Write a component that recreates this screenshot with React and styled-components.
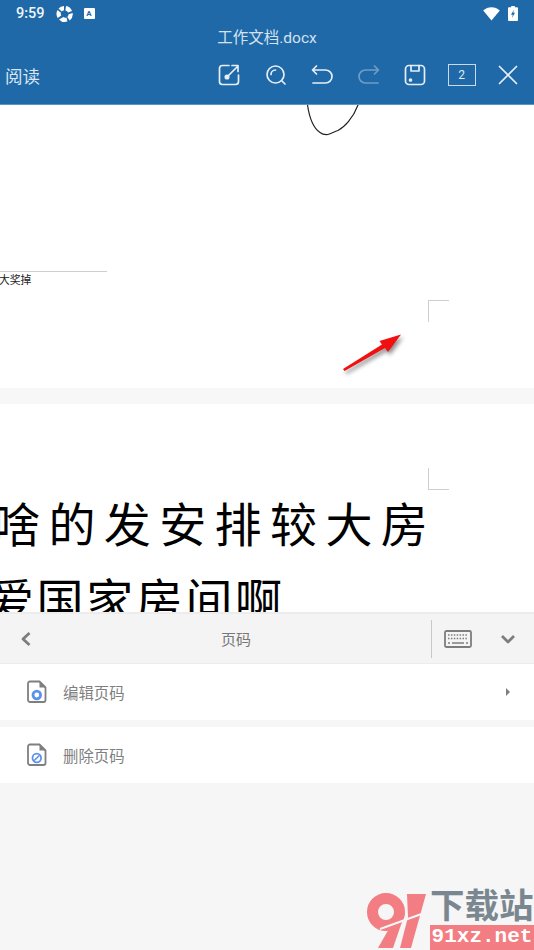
import styled, { createGlobalStyle } from 'styled-components';

const cjk = `Roboto, "Noto Sans CJK SC", sans-serif`;

const GlobalStyle = createGlobalStyle`
    html, body {
        margin: 0;
        padding: 0;
        background: #f6f6f6;
    }
    * {
        box-sizing: border-box;
    }
`

function ToolIcon({ children, dim }){
    return (
        <IconSlot dim={dim}>
            <svg width="26" height="26" viewBox="0 0 26 26" fill="none" stroke="currentColor" strokeWidth="1.700" strokeLinecap="round" strokeLinejoin="round">
                {children}
            </svg>
        </IconSlot>
    );
}

function PageIcon({ children }){
    return (
        <svg width="22" height="24" viewBox="0 0 22 24" fill="none">
            <path d="M4 1.5h9.5l6 6V20a2 2 0 0 1-2 2H4a2 2 0 0 1-2-2V3.500a2 2 0 0 1 2-2z" stroke="#7f7f7f" strokeWidth="1.800" strokeLinejoin="round" />
            <path d="M13.500 1.500v6h6z" fill="#7f7f7f" />
            {children}
        </svg>
    );
}

export default function App(){
    return (
        <Screen>
            <GlobalStyle />
            <Header>
                <StatusBar>
                    <Time>9:59</Time>
                    <svg width="18" height="18" viewBox="0 0 18 18" fill="#fff">
                        <path d="M8 1a8 8 0 0 0-5.500 2.600l3.300 2.900A4 4 0 0 1 8 5.200zM10 1.100l-.6 4.300a4 4 0 0 1 2.700 2.100l3.900-1.600A8 8 0 0 0 10 1.100zM16.700 8l-4.100 1.200a4 4 0 0 1-1.300 2.700l2.400 3.500A8 8 0 0 0 16.700 8zM1.500 5a8 8 0 0 0 .2 8l3.600-2.500a4 4 0 0 1-.4-2.700zM3 14.400a8 8 0 0 0 8.400 2.200l-.9-4.100a4 4 0 0 1-3.200-.4z" />
                    </svg>
                    <StatusBadge>A</StatusBadge>
                    <StatusRight>
                        <svg width="17" height="14" viewBox="0 0 17 14" fill="#fff">
                            <path d="M.2 3.600C2.400 1.400 5.300.2 8.500.2s6.100 1.200 8.300 3.400L8.500 13.600z" />
                        </svg>
                        <svg width="10" height="15" viewBox="0 0 10 15">
                            <path d="M3.200 0h3.600v1.200H9a1 1 0 0 1 1 1V14a1 1 0 0 1-1 1H1a1 1 0 0 1-1-1V2.200a1 1 0 0 1 1-1h2.200z" fill="#fff" />
                            <path d="M6 3.500L3 8.700h1.800L4 12l3-5.200H5.200z" fill="#1f69a9" />
                        </svg>
                    </StatusRight>
                </StatusBar>
                <Title>工作文档.docx</Title>
                <Toolbar>
                    <ReadLabel>阅读</ReadLabel>
                    <ToolIcons>
                        <ToolIcon>
                            <path d="M13 3.500H6.500a3 3 0 0 0-3 3v13a3 3 0 0 0 3 3h13a3 3 0 0 0 3-3V13" />
                            <path d="M12 14l9.500-9.500M16 3.500h6v6" />
                            <circle cx="11" cy="15" r="1.700" fill="currentColor" />
                        </ToolIcon>
                        <ToolIcon>
                            <circle cx="12.500" cy="12.500" r="8.500" />
                            <path d="M8 12.500a4.500 4.500 0 0 1 4.500-4.500M18.500 18.500l3.500 3.500" />
                        </ToolIcon>
                        <ToolIcon>
                            <path d="M7.500 4L3.500 8l4 4M4 8h12.500a6 6 0 0 1 0 13H4" />
                        </ToolIcon>
                        <ToolIcon dim>
                            <path d="M18.500 4l4 4-4 4M22 8H9.500a6 6 0 0 0 0 13H22" />
                        </ToolIcon>
                        <ToolIcon>
                            <rect x="3.500" y="3.500" width="19" height="19" rx="3.500" />
                            <path d="M9 3.500v5.500h8V3.500" />
                            <circle cx="8.500" cy="18" r="1" fill="currentColor" />
                        </ToolIcon>
                        <IconSlot>
                            <PageCount>2</PageCount>
                        </IconSlot>
                        <ToolIcon>
                            <path d="M4.500 4.500l17 17M21.500 4.500l-17 17" />
                        </ToolIcon>
                    </ToolIcons>
                </Toolbar>
            </Header>

            <Document>
                <FirstSheet>
                    <Scribble width="60" height="31" viewBox="0 0 60 31" fill="none">
                        <path d="M2.500 0C4 10 8 23 15 27.500c2 1.500 5 2.500 8 2 3-1 6-2.500 10-4 6-3 15-12 20-25.500" stroke="#222" strokeWidth="1.200" strokeLinecap="round" />
                    </Scribble>
                    <FootRule />
                    <FootNote>大奖掉</FootNote>
                    <CropMark top={12} />
                </FirstSheet>
                <SheetGap />
                <SecondSheet>
                    <CropMark top={64} />
                    <BodyText>
                        <BodyLine spacing={8.4} indent={-7}>啥的发安排较大房</BodyLine>
                        <BodyLine spacing={2.6} indent={-13}>爱国家房间啊</BodyLine>
                    </BodyText>
                </SecondSheet>
                <Arrow width="64" height="44" viewBox="0 0 64 44">
                    <path d="M3 37L42 12.500 39.500 9 61 2.500 48 20l-3-4L4.500 39z" fill="#f01010" />
                </Arrow>
            </Document>

            <Panel>
                <PanelHeader>
                    <BackIcon width="12" height="16" viewBox="0 0 12 16" fill="none">
                        <path d="M9.500 2L3 8l6.500 6" stroke="#7d7d7d" strokeWidth="2.800" strokeLinejoin="round" />
                    </BackIcon>
                    <PanelTitle>页码</PanelTitle>
                    <Divider />
                    <KeyboardIcon width="28" height="18" viewBox="0 0 28 18" fill="none">
                        <rect x="1" y="1" width="26" height="16" rx="1.500" stroke="#7d7d7d" strokeWidth="1.800" />
                        <path d="M4 5h20M4 8.500h20" stroke="#7d7d7d" strokeWidth="1.500" strokeDasharray="1.500 1.400" />
                        <path d="M4 13h2M8 13h12M22 13h2" stroke="#7d7d7d" strokeWidth="1.500" />
                    </KeyboardIcon>
                    <CollapseIcon width="16" height="12" viewBox="0 0 16 12" fill="none">
                        <path d="M2 3l6 6 6-6" stroke="#7d7d7d" strokeWidth="2.800" strokeLinejoin="round" />
                    </CollapseIcon>
                </PanelHeader>
                <MenuRow>
                    <PageIcon>
                        <circle cx="10.800" cy="15" r="3.800" stroke="#5b92ec" strokeWidth="2.800" />
                    </PageIcon>
                    <MenuLabel>编辑页码</MenuLabel>
                    <RowCaret />
                </MenuRow>
                <MenuRow>
                    <PageIcon>
                        <circle cx="10.800" cy="15" r="4.300" stroke="#5b92ec" strokeWidth="1.800" />
                        <path d="M8 17.800l5.600-5.600" stroke="#5b92ec" strokeWidth="1.600" />
                    </PageIcon>
                    <MenuLabel>删除页码</MenuLabel>
                </MenuRow>
            </Panel>

            <Watermark>
                <svg width="66" height="60" viewBox="0 0 66 60" fill="none">
                    <circle cx="22" cy="22" r="13.500" stroke="#f27d82" strokeWidth="11" />
                    <path d="M41 23L29 58H14L30 30z" fill="#f27d82" />
                    <path d="M43 4h19L47 58H36L44 27z" fill="#f27d82" />
                    <path d="M16 39l47-17" stroke="#f6f6f6" strokeWidth="2" />
                </svg>
                <WatermarkText>
                    <SiteName>下载站</SiteName>
                    <SiteUrl>91xz.net</SiteUrl>
                </WatermarkText>
            </Watermark>
        </Screen>
    );
}

const Screen = styled.div`
    position: relative;
    width: 534px;
    height: 950px;
    overflow: hidden;
    display: flex;
    flex-direction: column;
    background: #f6f6f6;
    font-family: ${cjk};
`
const Header = styled.div`
    height: 105px;
    flex-shrink: 0;
    display: flex;
    flex-direction: column;
    background: #1f69a9;
    border-bottom: 1px solid #5f93c2;
    color: #fff;
`
const StatusBar = styled.div`
    height: 28px;
    display: flex;
    align-items: center;
    gap: 11px;
    padding: 0 16px 1px 16px;
`
const Time = styled.span`
    font-size: 14.500px;
    font-weight: 500;
    margin-right: 0;
    color: #f2f6fa;
`
const StatusBadge = styled.span`
    width: 11px;
    height: 11px;
    margin-left: -1px;
    display: flex;
    align-items: center;
    justify-content: center;
    background: #fff;
    border-radius: 1px;
    font-size: 8px;
    font-weight: 700;
    color: #1f69a9;
`
const StatusRight = styled.div`
    margin-left: auto;
    display: flex;
    align-items: center;
    gap: 8px;
`
const Title = styled.div`
    height: 22px;
    line-height: 21px;
    text-align: center;
    font-size: 15.500px;
    color: #d5e2ee;
`
const Toolbar = styled.div`
    height: 34px;
    margin-top: 8px;
    display: flex;
    align-items: center;
    justify-content: space-between;
    padding: 0 6px 0 5px;
`
const ReadLabel = styled.span`
    font-size: 17.500px;
    color: #d9e5f0;
`
const ToolIcons = styled.div`
    display: flex;
    align-items: center;
    gap: 6.500px;
`
const IconSlot = styled.div`
    width: 40px;
    height: 34px;
    display: flex;
    align-items: center;
    justify-content: center;
    color: ${props => props.dim ? "#6f9dc6" : "#e6eef5"};
`
const PageCount = styled.div`
    width: 28px;
    height: 22px;
    display: flex;
    align-items: center;
    justify-content: center;
    border: 1.500px solid #c9dbea;
    font-size: 12px;
    color: #dfe9f2;
`
const Document = styled.div`
    position: relative;
    height: 507px;
    flex-shrink: 0;
    overflow: hidden;
    background: #fff;
`
const FirstSheet = styled.div`
    height: 283px;
    display: flex;
    flex-direction: column;
    background: #fff;
`
const Scribble = styled.svg`
    flex-shrink: 0;
    margin-left: 305px;
`
const FootRule = styled.div`
    width: 107px;
    height: 1px;
    margin-top: 135px;
    background: #cfcfcf;
`
const FootNote = styled.div`
    height: 14px;
    margin: 2px 0 0 -1px;
    line-height: 14px;
    font-size: 10.800px;
    color: #222;
`
const CropMark = styled.div`
    width: 21px;
    height: 22px;
    flex-shrink: 0;
    margin: ${props => props.top}px 0 0 428px;
    border-left: 1px solid #cfcfcf;
    border-top: ${props => props.top < 20 ? "1px solid #cfcfcf" : "none"};
    border-bottom: ${props => props.top < 20 ? "none" : "1px solid #cfcfcf"};
`
const SheetGap = styled.div`
    height: 16px;
    background: #f7f7f7;
`
const SecondSheet = styled.div`
    height: 208px;
    overflow: hidden;
    background: #fff;
`
const BodyText = styled.div`
    margin-top: -2px;
`
const BodyLine = styled.div`
    height: 76px;
    line-height: 76px;
    margin-left: ${props => props.indent}px;
    white-space: nowrap;
    font-size: 47px;
    letter-spacing: ${props => props.spacing}px;
    color: #000;
`
const Arrow = styled.svg`
    position: absolute;
    left: 340px;
    top: 227px;
    filter: drop-shadow(2px 3px 2px rgba(0, 0, 0, 0.45));
`
const Panel = styled.div`
    flex: 1;
    display: flex;
    flex-direction: column;
    gap: 7px;
    background: #f6f6f6;
`
const PanelHeader = styled.div`
    height: 52px;
    display: flex;
    align-items: center;
    padding-left: 20px;
    background: #f4f4f4;
    border-top: 2px solid #ececec;
    border-bottom: 1px solid #ececec;
    margin-bottom: -7px;
`
const BackIcon = styled.svg`
    flex-shrink: 0;
`
const PanelTitle = styled.span`
    width: 399px;
    padding-left: 9px;
    text-align: center;
    font-size: 15px;
    color: #777;
`
const Divider = styled.div`
    width: 1px;
    height: 38px;
    background: #c8c8c8;
`
const KeyboardIcon = styled.svg`
    margin-left: 12px;
`
const CollapseIcon = styled.svg`
    margin-left: 28px;
`
const MenuRow = styled.div`
    height: 56px;
    display: flex;
    align-items: center;
    gap: 15px;
    padding: 0 24px 0 26px;
    background: #fff;
`
const MenuLabel = styled.span`
    font-size: 15.400px;
    margin-top: -1px;
    color: #7f7f7f;
`
const RowCaret = styled.div`
    margin-left: auto;
    width: 0;
    height: 0;
    border-left: 4px solid #7f7f7f;
    border-top: 4px solid transparent;
    border-bottom: 4px solid transparent;
`
const Watermark = styled.div`
    position: absolute;
    left: 364px;
    top: 890px;
    display: flex;
    align-items: flex-start;
`
const WatermarkText = styled.div`
    display: flex;
    flex-direction: column;
    gap: 2px;
`
const SiteName = styled.div`
    height: 33px;
    line-height: 33px;
    font-size: 34.500px;
    font-weight: 700;
    color: #7b8790;
`
const SiteUrl = styled.div`
    height: 25px;
    width: 104px;
    line-height: 24px;
    text-align: center;
    background: #f27d82;
    font-family: "Liberation Mono", monospace;
    font-size: 21px;
    font-weight: 700;
    color: #fff;
`
